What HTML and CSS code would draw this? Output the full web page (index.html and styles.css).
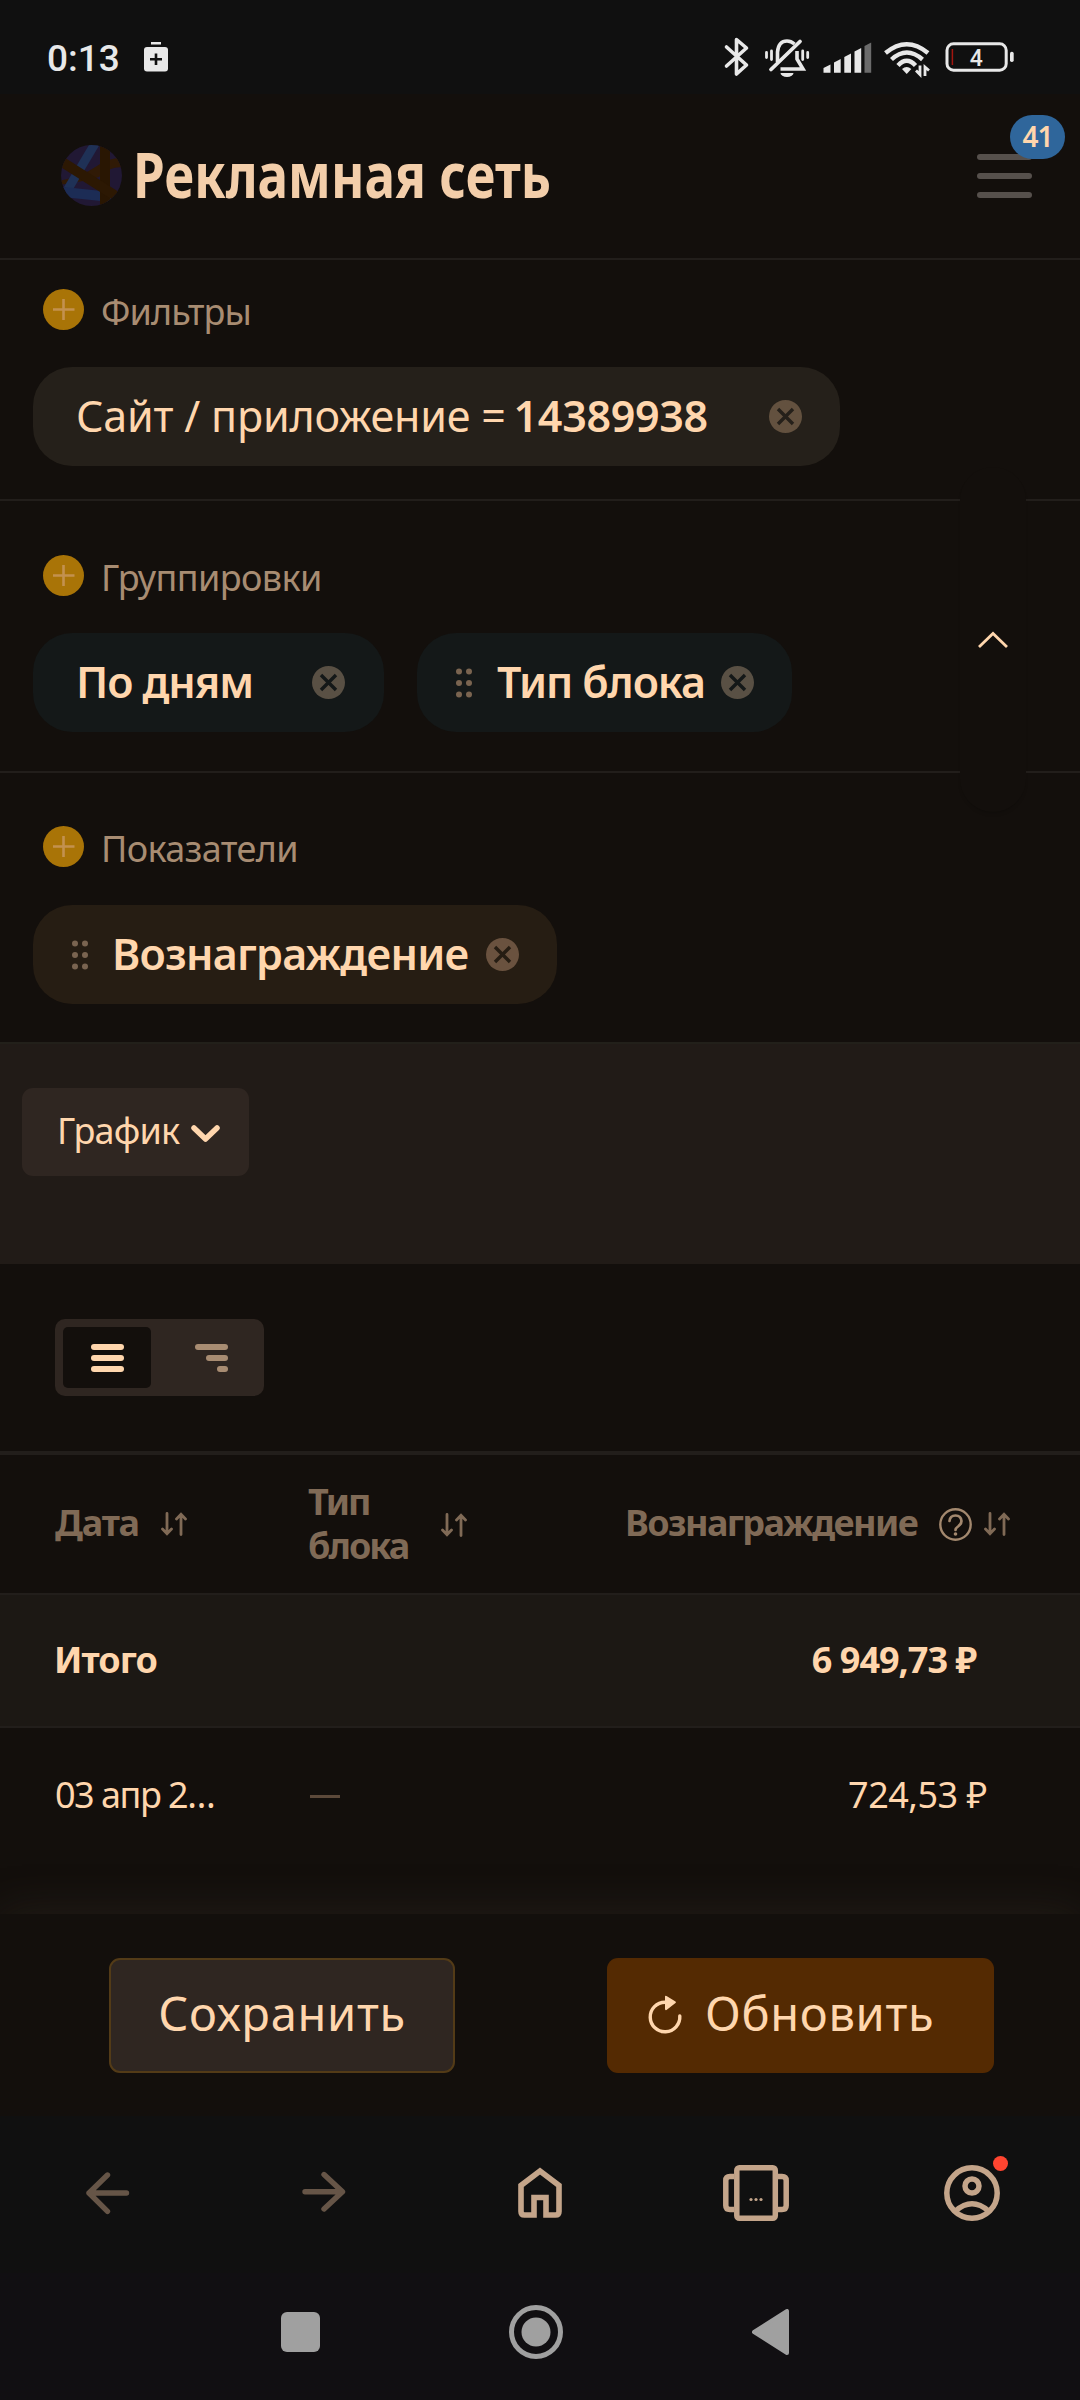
FILE: index.html
```
<!DOCTYPE html>
<html lang="ru">
<head>
<meta charset="utf-8">
<title>Рекламная сеть</title>
<link rel="stylesheet" href="styles.css">
</head>
<body>
<svg class="defs" width="0" height="0">
  <symbol id="plus" viewBox="0 0 41 41"><circle cx="20.500" cy="20.500" r="20.500" fill="#a97407"/><path d="M10 20.500H31.500M20.500 10V31" stroke="#c3914f" stroke-width="2.600"/></symbol>
  <symbol id="close" viewBox="0 0 33 33"><circle cx="16.500" cy="16.500" r="16.500" fill="currentColor"/><path d="M9 9L24 24M24 9L9 24" stroke="var(--chip)" stroke-width="3.400"/></symbol>
  <symbol id="grip" viewBox="0 0 16 30"><g fill="#7a6450"><circle cx="3" cy="3.500" r="3"/><circle cx="13" cy="3.500" r="3"/><circle cx="3" cy="15" r="3"/><circle cx="13" cy="15" r="3"/><circle cx="3" cy="26.500" r="3"/><circle cx="13" cy="26.500" r="3"/></g></symbol>
  <symbol id="sort" viewBox="0 0 26 24"><path d="M6 1.500V21.500M1.500 17L6 21.700L10.500 17M20 22.500V2.500M15.500 7L20 2.300L24.500 7" fill="none" stroke="#806a56" stroke-width="2.800" stroke-linecap="round"/></symbol>
</svg>

<div class="status">
  <span class="clock">0:13</span>
  <svg class="saver" width="24" height="30" viewBox="0 0 24 30"><path d="M7 0h10v2.500H7z" fill="#e8e8e8"/><rect y="5" width="24" height="24.500" rx="3" fill="#e8e8e8"/><path d="M6 17.300h12M12 11.500v11.500" stroke="#101010" stroke-width="2.600"/></svg>
  <svg class="status-icons" width="292" height="44" viewBox="0 0 292 44" fill="none" stroke="#e8e8e8">
    <path d="M3.500 12L23.500 30L13.500 39V4.500L23.500 13L3.500 31" stroke-width="3.600" stroke-linejoin="round" stroke-linecap="round"/>
    <path d="M54.500 27V17Q55.500 6 64 6Q68 6 71.500 9M74 16V24L80 34H57.500" stroke-width="3.600"/>
    <path d="M48 34.500L77 6.500" stroke-width="3.800" stroke-linecap="round"/>
    <path d="M43.500 17.500V22.500M48.500 16V24.500M79.700 16V24.500M84.700 17.500V22.500" stroke-width="2.800" stroke-linecap="round"/>
    <path d="M57.500 38H70.500A6.500 4 0 0 1 57.500 38z" fill="#e8e8e8" stroke="none"/>
    <g fill="#e8e8e8" stroke="none"><path d="M100.500 37.700V33l7-3.500v8.200z"/><path d="M111 37.700V27.500l6.700-3.500v13.700z"/><path d="M121.300 37.700V22l6.700-3.500v19.200z"/><path d="M131.500 37.700V16.500l6.700-3.500v24.700z"/></g>
    <path d="M141.500 37.700V11l6.700-3.500v30.200z" fill="#6b6b6b" stroke="none"/>
    <path d="M162.500 18Q183.700 .5 205 18M168.500 24.500Q183.700 10.500 199.500 24.500M175 30.500Q183.700 21 192.500 30.500" stroke-width="4.400"/>
    <path d="M179 34Q183.700 30 188.300 34L183.700 39z" fill="#e8e8e8" stroke="none"/>
    <path d="M197 30.500V39.500L193 35.500M202 41V32L206 35.500" stroke-width="2.800"/>
    <rect x="224" y="8.800" width="59.200" height="26.400" rx="6.500" stroke-width="3"/>
    <path d="M229.400 14V30" stroke="#a3160f" stroke-width="1.500"/>
    <rect x="287" y="16.700" width="3.700" height="10.300" rx="1.700" fill="#e8e8e8" stroke="none"/>
    <text x="253.300" y="30.600" text-anchor="middle" class="battery-level">4</text>
  </svg>
</div>

<header class="header">
  <svg class="logo" width="61" height="61" viewBox="0 0 61 61">
    <clipPath id="disc"><circle cx="30.500" cy="30.500" r="30.500"/></clipPath>
    <g clip-path="url(#disc)"><rect width="61" height="61" fill="#211834"/>
      <path d="M-2 36Q20 32 36 21Q48 12 63 13V22Q46 22 38 32Q24 36 10 38L-2 40z" fill="#301a06"/>
      <path d="M35 -3L7 44" stroke="#1f3156" stroke-width="9"/>
      <path d="M2 47L50 52" stroke="#1c2c55" stroke-width="10"/>
      <path d="M44 0V61" stroke="#291602" stroke-width="10"/>
      <path d="M-2 15L58 53" stroke="#2c1803" stroke-width="10"/></g>
  </svg>
  <h1 class="title">Рекламная сеть</h1>
  <div class="menu"><i></i><i></i><i></i><span class="badge">41</span></div>
</header>

<main class="main">
  <section class="panel filters">
    <div class="label"><svg width="41" height="41"><use href="#plus"/></svg><span>Фильтры</span></div>
    <div class="chips">
      <div class="chip chip-site"><span class="chip-text site">Сайт / приложение = <b>14389938</b></span><svg class="x" width="33" height="33"><use href="#close"/></svg></div>
    </div>
  </section>
  <section class="panel groups">
    <div class="label"><svg width="41" height="41"><use href="#plus"/></svg><span>Группировки</span></div>
    <div class="chips">
      <div class="chip chip-day"><span class="chip-text">По дням</span><svg class="x" width="33" height="33"><use href="#close"/></svg></div>
      <div class="chip chip-type"><svg width="16" height="30"><use href="#grip"/></svg><span class="chip-text">Тип блока</span><svg class="x" width="33" height="33"><use href="#close"/></svg></div>
    </div>
  </section>
  <section class="panel metrics">
    <div class="label"><svg width="41" height="41"><use href="#plus"/></svg><span>Показатели</span></div>
    <div class="chips">
      <div class="chip chip-reward"><svg width="16" height="30"><use href="#grip"/></svg><span class="chip-text">Вознаграждение</span><svg class="x" width="33" height="33"><use href="#close"/></svg></div>
    </div>
  </section>
  <div class="collapse"><svg width="32" height="18" viewBox="0 0 32 18"><path d="M2 16L16 2.500L30 16" fill="none" stroke="#ffd6ad" stroke-width="2.800"/></svg></div>

  <section class="chart">
    <div class="chart-button"><span>График</span><svg width="29" height="18" viewBox="0 0 29 18"><path d="M3 3L14.500 14L26 3" fill="none" stroke="#ffd6ad" stroke-width="5.500" stroke-linecap="round" stroke-linejoin="round"/></svg></div>
  </section>

  <section class="toolbar">
    <div class="toggle">
      <div class="option active"><i></i><i></i><i></i></div>
      <div class="option tree"><i class="l"></i><i class="m"></i><i class="s"></i></div>
    </div>
  </section>

  <section class="table">
    <div class="row head">
      <div class="cell date"><span>Дата</span><svg width="26" height="24"><use href="#sort"/></svg></div>
      <div class="cell type"><span>Тип<br>блока</span><svg width="26" height="24"><use href="#sort"/></svg></div>
      <div class="cell reward"><span>Вознаграждение</span><svg class="help" width="33" height="33" viewBox="0 0 33 33" fill="none" stroke="#a3886e"><circle cx="16.500" cy="16.500" r="15.200" stroke-width="2.400"/><path d="M10.500 13Q11 7.500 16.500 7.500T22.500 13Q22.500 16 19 18.500Q16.500 20.200 16.500 22" stroke-width="2.700" stroke-linecap="round"/><circle cx="16.500" cy="26" r="1.800" fill="#a3886e" stroke="none"/></svg><svg width="26" height="24"><use href="#sort"/></svg></div>
    </div>
    <div class="row total"><div class="cell">Итого</div><div class="cell"></div><div class="cell sum">6 949,73 ₽</div></div>
    <div class="row data"><div class="cell">03 апр 2…</div><div class="cell"><i class="dash"></i></div><div class="cell sum">724,53 ₽</div></div>
  </section>
</main>

<footer class="actions">
  <div class="button save">Сохранить</div>
  <div class="button refresh"><svg width="36" height="40" viewBox="0 0 36 40"><path d="M31.800 21A14.800 14.800 0 1 1 17 7.200" fill="none" stroke="#ffd6ad" stroke-width="3.400" stroke-linecap="round"/><path d="M17 1.500Q17 .5 18.500 1L27.500 6.500Q28.500 7.300 27.500 8L18.500 15Q17 15.500 17 14z" fill="#ffd6ad"/></svg><span>Обновить</span></div>
</footer>

<nav class="browser-nav">
  <svg width="44" height="44" viewBox="0 0 44 44" fill="none" stroke="#665547" stroke-width="5.400" stroke-linecap="round" stroke-linejoin="round"><path d="M40.500 22H3M21.500 4L3 22L21.500 40.300"/></svg>
  <svg width="44" height="44" viewBox="0 0 44 44" fill="none" stroke="#665547" stroke-width="5.400" stroke-linecap="round" stroke-linejoin="round"><path d="M3 20.800H40M22 3.500L40.500 20.800L22 38"/></svg>
  <svg width="46" height="56" viewBox="0 0 46 56" fill="none" stroke="#c4a58a" stroke-width="5.600" stroke-linejoin="round"><path d="M17 50H7.500Q4 50 4 46.500V20.500L23 6L42 20.500V46.500Q42 50 38.500 50H29V32.500H17z" stroke-linejoin="miter"/></svg>
  <svg width="66" height="56" viewBox="0 0 66 56" fill="none" stroke="#c4a58a" stroke-width="5.500"><rect x="13.800" y="2.800" width="38.500" height="50.400" rx="2.500"/><path d="M11 11.500H7Q2.800 11.500 2.800 15.500V40.500Q2.800 44.500 7 44.500H11M55 11.500H59Q63.200 11.500 63.200 15.500V40.500Q63.200 44.500 59 44.500H55"/><g fill="#c4a58a" stroke="none"><circle cx="28" cy="34.500" r="1.600"/><circle cx="33" cy="34.500" r="1.600"/><circle cx="38" cy="34.500" r="1.600"/></g></svg>
  <span class="profile"><svg width="56" height="56" viewBox="0 0 56 56" fill="none" stroke="#c4a58a" stroke-width="5.500"><circle cx="28" cy="28" r="25.200"/><circle cx="28" cy="21" r="7"/><path d="M11.500 46Q28 31.500 44.500 46"/></svg></span>
</nav>

<nav class="system-nav">
  <svg width="39" height="40"><rect width="39" height="40" rx="6" fill="#a0a0a0"/></svg>
  <svg width="54" height="54" viewBox="0 0 54 54"><circle cx="27" cy="27" r="24.500" fill="none" stroke="#a0a0a0" stroke-width="5"/><circle cx="27" cy="27" r="14.500" fill="#a0a0a0"/></svg>
  <svg width="37" height="46" viewBox="0 0 37 46"><path d="M2 23L35 2V44z" fill="#a0a0a0" stroke="#a0a0a0" stroke-width="4" stroke-linejoin="round"/></svg>
</nav>
</body>
</html>
```
FILE: styles.css
```
* { box-sizing: border-box; }
body {
  margin: 0;
  width: 1080px;
  height: 2400px;
  overflow: hidden;
  display: flex;
  flex-direction: column;
  background: #130f0c;
  color: #ffd6ad;
  font-family: "Noto Sans", "Open Sans", sans-serif;
  font-size: 36px;
  line-height: 44px;
}
svg { display: block; flex: none; }
.defs { position: absolute; }

.status {
  flex: none;
  height: 94px;
  padding: 24px 65px 0 47px;
  display: flex;
  align-items: flex-start;
  background: #101010;
}
.clock {
  width: 97px;
  padding-top: 13px;
  font: 500 37px/44px Roboto, sans-serif;
  color: #e8e8e8;
}
.saver { margin-top: 18px; }
.status-icons { margin: 11px 0 0 auto; }
.battery-level { font: 500 23px Roboto, sans-serif; fill: #e8e8e8; stroke: none; }

.header {
  flex: none;
  height: 166px;
  display: flex;
  align-items: center;
  padding: 0 48px 0 61px;
  border-bottom: 2px solid #221e1b;
}
.logo { margin-top: -2px; }
.title {
  margin: -4px 0 0 11px;
  font-size: 63px;
  line-height: 80px;
  font-weight: 700;
  color: #f3ceaa;
  white-space: nowrap;
  transform: scaleX(.812);
  transform-origin: left;
}
.menu {
  position: relative;
  margin-left: auto;
  width: 55px;
  display: grid;
  gap: 13px;
}
.menu i { height: 6px; border-radius: 3px; background: #56504c; }
.badge {
  position: absolute;
  left: 33px;
  top: -39px;
  width: 55px;
  height: 44px;
  border-radius: 22px;
  background: #2f669b;
  font-size: 28px;
  font-weight: 600;
  line-height: 42px;
  letter-spacing: -1px;
  text-align: center;
}

.main { position: relative; flex: none; height: 1654px; }
.panel { padding: 0 33px; border-bottom: 2px solid #221e1b; }
.filters { height: 241px; padding-top: 29px; }
.groups { height: 272px; padding-top: 54px; }
.metrics { height: 269px; padding-top: 53px; border-bottom: 0; }
.label {
  display: flex;
  align-items: center;
  gap: 17px;
  height: 41px;
  margin: 0 0 37px 10px;
  color: #a88c72;
  letter-spacing: -.6px;
}
.metrics .label { margin-bottom: 38px; }
.label span { padding-top: 4px; }
.filters .label span { letter-spacing: -.9px; }
.chips { display: flex; gap: 33px; }
.chip {
  --chip: #141818;
  display: flex;
  align-items: center;
  gap: 22px;
  height: 99px;
  padding: 0 38px 0 39px;
  border-radius: 39px;
  background: var(--chip);
  color: #595044;
}
.chip .x { margin-left: auto; }
.chip-text {
  padding-bottom: 1px;
  font-size: 43px;
  line-height: 60px;
  font-weight: 600;
  letter-spacing: -1.1px;
  white-space: nowrap;
  color: #ffd6ad;
}
.chip-site { --chip: #25201a; width: 807px; padding-left: 43px; color: #63513f; }
.site { font-weight: 400; letter-spacing: -.2px; }
.site b { margin-left: -3px; font-weight: 600; letter-spacing: -.3px; }
.chip-day { width: 351px; padding: 0 39px 0 43px; }
.chip-type { width: 375px; }
.chip-type .chip-text { margin: 0 -12px 0 3px; }
.chip-reward { --chip: #261d13; width: 524px; color: #6a523f; }
.chip-reward .chip-text { margin: 0 -12px 0 2px; padding-bottom: 2px; letter-spacing: -.75px; }
.collapse {
  position: absolute;
  left: 960px;
  top: 207px;
  width: 66px;
  height: 345px;
  display: flex;
  align-items: center;
  justify-content: center;
  border-radius: 33px;
  background: #130f0c;
  box-shadow: 0 3px 4px -2px rgba(0, 0, 0, .2);
}

.chart {
  height: 222px;
  padding: 44px 22px 0;
  border-top: 2px solid #22201a;
  background: #211b17;
}
.chart-button {
  width: 227px;
  height: 88px;
  display: flex;
  align-items: center;
  gap: 12px;
  padding: 0 28px 2px 35px;
  border-radius: 11px;
  background: #2f2621;
  letter-spacing: -.8px;
}
.chart-button svg { margin-top: 5px; }

.toolbar { height: 191px; padding: 55px 55px 0; border-bottom: 4px solid #221e1b; }
.toggle {
  display: flex;
  width: 209px;
  height: 77px;
  padding: 8px;
  border-radius: 10px;
  background: #2f2621;
}
.option {
  width: 88px;
  display: grid;
  align-content: center;
  justify-items: end;
  gap: 5px;
  padding-right: 27px;
  border-radius: 5px;
}
.option i { width: 33px; height: 6px; border-radius: 3px; background: #ffd6ad; }
.active { background: #130f0c; }
.tree { margin-left: 16px; }
.tree i { background: #a88c72; }
.tree .m { width: 22px; }
.tree .s { width: 11px; }

.row {
  display: grid;
  grid-template-columns: 254px 317px 1fr;
  align-items: center;
  padding-left: 54px;
}
.cell { display: flex; align-items: center; }
.head {
  height: 140px;
  border-bottom: 2px solid #221e1b;
  color: #806a56;
  font-weight: 700;
  letter-spacing: -1.2px;
}
.date span, .reward span { padding-bottom: 3px; }
.date { padding-left: 1px; }
.date svg { margin-left: 22px; }
.type { line-height: 43.7px; letter-spacing: -2px; }
.type span { width: 100px; }
.type svg { margin: 2px 0 0 33px; }
.reward { justify-content: flex-end; padding-right: 72px; letter-spacing: -1.6px; }
.help { margin: 0 12px 0 22px; }
.total {
  height: 133px;
  padding-bottom: 2px;
  border-bottom: 2px solid #221e1b;
  background: #1c1814;
  font-weight: 700;
  letter-spacing: -1px;
}
.sum { justify-content: flex-end; }
.total .sum { padding-right: 104px; }
.data { height: 133px; padding-left: 55px; letter-spacing: -1.5px; }
.data .sum { padding-right: 93px; letter-spacing: -.5px; }
.dash { width: 30px; height: 3px; margin: 4px 0 0 1px; background: #5c493a; }

.actions {
  flex: none;
  height: 202px;
  display: flex;
  justify-content: space-between;
  padding: 44px 86px 0 109px;
  background: #130f0c;
  box-shadow: 0 0 44px rgba(70, 62, 50, .32);
  font-size: 47px;
  line-height: 64px;
  letter-spacing: .7px;
}
.button { display: flex; align-items: center; height: 115px; padding-bottom: 6px; border-radius: 11px; }
.save { width: 346px; justify-content: center; border: 2px solid #533b17; background: #2f2621; }
.refresh { width: 387px; padding-left: 41px; gap: 21px; background: #542a02; }
.refresh svg { margin-top: 4px; }

.browser-nav {
  position: relative;
  flex: none;
  height: 157px;
  padding-bottom: 4px;
  display: grid;
  grid-template-columns: repeat(5, 1fr);
  place-items: center;
  background: #101010;
}
.profile { position: relative; }
.profile::after {
  content: "";
  position: absolute;
  left: 49px;
  top: -9px;
  width: 15px;
  height: 15px;
  border-radius: 50%;
  background: #ff4530;
}
.system-nav {
  flex: 1;
  display: flex;
  align-items: center;
  gap: 189px;
  padding: 0 0 9px 281px;
  background: #110f12;
}
```
